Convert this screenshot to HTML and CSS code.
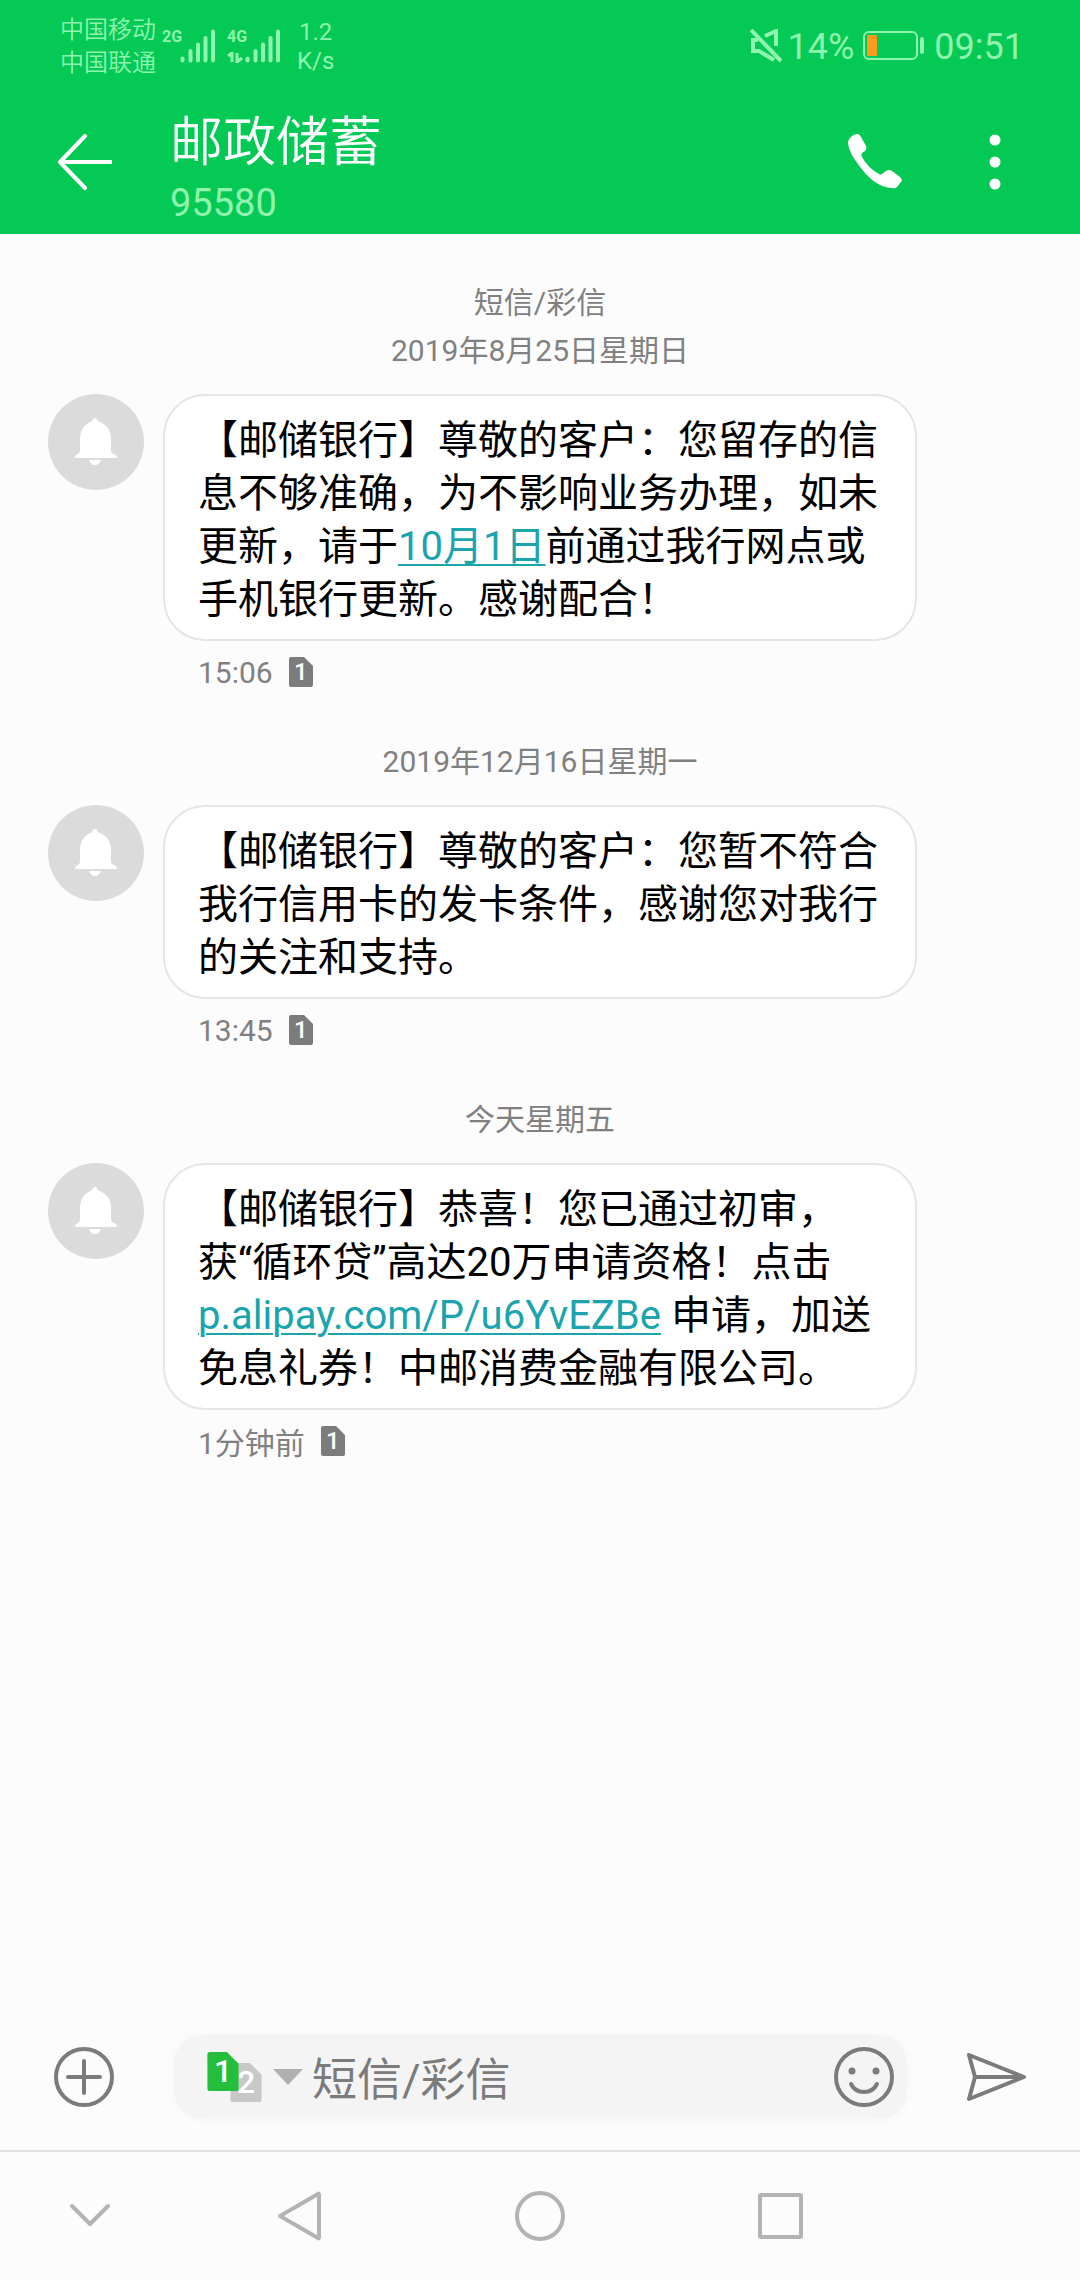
FILE: index.html
```html
<!DOCTYPE html>
<html lang="zh-CN">
<head>
<meta charset="utf-8">
<meta name="viewport" content="width=device-width, initial-scale=1">
<title>邮政储蓄</title>
<link rel="stylesheet" href="styles.css">
</head>
<body>
<svg class="defs" aria-hidden="true">
  <symbol id="bell" viewBox="0 0 96 96">
    <path d="M47 24Q49 24 50 27Q63 32 63 45V56Q63 59 66 60Q69 61 69 64H27Q27 61 30 60Q32 59 32 56V45Q32 32 44 27Q45 24 47 24ZM41 66H53Q51 71 47 71Q43 71 41 66Z"/>
  </symbol>
  <symbol id="sim" viewBox="0 0 24 30">
    <path d="M2 0H15L24 9V28Q24 30 22 30H2Q0 30 0 28V2Q0 0 2 0Z"/>
  </symbol>
  <symbol id="signal" viewBox="0 0 36 34">
    <path d="M2.500 29.500v2M10.500 22v9.500M18 15.500v16M25.500 9v22.500M33 2.500v29"/>
  </symbol>
</svg>

<header class="header">
  <div class="status">
    <div class="carriers"><span>中国移动</span><span>中国联通</span></div>
    <div class="net"><span class="gen">2G</span></div>
    <svg class="bars"><use href="#signal"/></svg>
    <div class="net net-second"><span class="gen">4G</span>
      <svg class="arrows" viewBox="0 0 16 11"><path d="M1 4L5 1V10M10 1V10L15 6"/></svg>
    </div>
    <svg class="bars"><use href="#signal"/></svg>
    <div class="speed"><span>1.2</span><span>K/s</span></div>
    <svg class="mute" viewBox="0 0 34 34"><path d="M1 1L31 32M15 7L26 2V17M8 11H3V22H9L24 31"/></svg>
    <span class="percent">14%</span>
    <svg class="battery" viewBox="0 0 62 30"><rect class="shell" x="1" y="1" width="53" height="27" rx="5"/><rect class="level" x="4" y="4" width="10" height="21" rx="1"/><rect class="cap" x="57" y="6" width="4" height="17" rx="2"/></svg>
    <time class="clock">09:51</time>
  </div>
  <div class="appbar">
    <button class="icon-btn" aria-label="返回"><svg class="back" viewBox="0 0 54 56"><path d="M27 2L2 28L27 54M2 28H53"/></svg></button>
    <div class="contact"><h1>邮政储蓄</h1><p>95580</p></div>
    <button class="icon-btn" aria-label="拨打电话"><svg class="phone" viewBox="0 0 54 56"><path d="M9 0C11 0 12 1 13 3L18 12C19 14 18 16 17 17L14 19Q13 21 14 23Q20 34 31 40Q33 41 34 40L38 37Q41 35 44 37L52 43Q55 46 53 48L49 53Q47 55 44 54Q27 53 13 34Q0 18 0 8Q1 4 4 2Q7 0 9 0Z"/></svg></button>
    <button class="icon-btn more-btn" aria-label="更多"><svg class="more" viewBox="0 0 12 56"><circle cx="6" cy="6" r="5.500"/><circle cx="6" cy="28" r="5.500"/><circle cx="6" cy="50" r="5.500"/></svg></button>
  </div>
</header>

<main class="thread">
  <section class="group">
    <h2 class="date">短信/彩信<br>2019年8月25日星期日</h2>
    <div class="message">
      <svg class="avatar"><use href="#bell"/></svg>
      <div class="content">
        <p class="bubble">【邮储银行】尊敬的客户：您留存的信息不够准确，为不影响业务办理，如未更新，请于<a href="#date">10月1日</a>前通过我行网点或手机银行更新。感谢配合！</p>
        <div class="meta"><time>15:06</time><span class="sim"><svg><use href="#sim"/></svg><b>1</b></span></div>
      </div>
    </div>
  </section>
  <section class="group">
    <h2 class="date">2019年12月16日星期一</h2>
    <div class="message">
      <svg class="avatar"><use href="#bell"/></svg>
      <div class="content">
        <p class="bubble">【邮储银行】尊敬的客户：您暂不符合我行信用卡的发卡条件，感谢您对我行的关注和支持。</p>
        <div class="meta"><time>13:45</time><span class="sim"><svg><use href="#sim"/></svg><b>1</b></span></div>
      </div>
    </div>
  </section>
  <section class="group">
    <h2 class="date">今天星期五</h2>
    <div class="message">
      <svg class="avatar"><use href="#bell"/></svg>
      <div class="content">
        <p class="bubble">【邮储银行】恭喜！您已通过初审，<br>获“循环贷”高达20万申请资格！点击<br><a href="#link">p.alipay.com/P/u6YvEZBe</a> 申请，加送<br>免息礼券！中邮消费金融有限公司。</p>
        <div class="meta"><time>1分钟前</time><span class="sim"><svg><use href="#sim"/></svg><b>1</b></span></div>
      </div>
    </div>
  </section>
</main>

<form class="composer">
  <button type="button" class="icon-btn" aria-label="添加"><svg class="round" viewBox="0 0 60 60"><circle cx="30" cy="30" r="28"/><path d="M30 14V46M14 30H46"/></svg></button>
  <div class="field">
    <button type="button" class="sim-pick" aria-label="选择 SIM 卡">
      <span class="sim sim-two"><svg><use href="#sim"/></svg><b>2</b></span>
      <span class="sim sim-one"><svg><use href="#sim"/></svg><b>1</b></span>
      <svg class="caret" viewBox="0 0 30 16"><path d="M0 0H30L15 16Z"/></svg>
    </button>
    <input type="text" aria-label="短信/彩信" placeholder="短信/彩信">
    <button type="button" class="icon-btn" aria-label="表情"><svg class="round" viewBox="0 0 60 60"><circle cx="30" cy="30" r="28"/><path d="M17 37Q21 45 30 45Q39 45 43 37"/><circle class="eye" cx="18" cy="24" r="3.500"/><circle class="eye" cx="42" cy="24" r="3.500"/></svg></button>
  </div>
  <button type="submit" class="icon-btn" aria-label="发送"><svg class="round" viewBox="0 0 60 60"><path d="M2 8L57 30L2 52L8 30ZM8 30H57"/></svg></button>
</form>

<nav class="navbar" aria-label="系统导航">
  <button class="icon-btn" aria-label="收起"><svg class="nav-icon" viewBox="0 0 50 50"><path d="M7 15L25 33L43 15"/></svg></button>
  <button class="icon-btn" aria-label="返回"><svg class="nav-icon" viewBox="0 0 50 50"><path d="M5 25L43 3Q44 2 44 4V46Q44 48 43 47Z"/></svg></button>
  <button class="icon-btn" aria-label="主屏幕"><svg class="nav-icon" viewBox="0 0 50 50"><circle cx="25" cy="25" r="23"/></svg></button>
  <button class="icon-btn" aria-label="最近任务"><svg class="nav-icon" viewBox="0 0 50 50"><rect x="5" y="4" width="41" height="42" rx="1"/></svg></button>
</nav>
</body>
</html>
```

FILE: styles.css
```css
* { box-sizing: border-box; }

body {
  margin: 0;
  min-height: 100vh;
  display: flex;
  flex-direction: column;
  background: #fdfcfd;
  color: #000;
  font-family: Roboto, "Noto Sans CJK SC", sans-serif;
}

h1, h2, p { margin: 0; font-weight: 400; }

svg { display: block; }

.defs { display: none; }

button {
  padding: 0;
  border: 0;
  background: none;
  color: inherit;
  font: inherit;
}

.icon-btn {
  display: flex;
  align-items: center;
  justify-content: center;
}

/* Header */
.header { background: #05c955; color: #fff; }

.status {
  display: flex;
  align-items: center;
  height: 92px;
  padding: 0 56px 0 60px;
  color: #8ff5ae;
}

.carriers, .speed {
  display: flex;
  flex-direction: column;
  padding-top: 2px;
}

.carriers {
  font-size: 24px;
  line-height: 33px;
  font-weight: 350;
}

.net {
  width: 18px;
  height: 36px;
  margin-left: 6px;
  display: flex;
  flex-direction: column;
  gap: 6px;
}

.net-second { margin-left: 11px; }

.gen {
  font-size: 16px;
  line-height: 18px;
  font-weight: 700;
}

.arrows { width: 16px; height: 11px; fill: none; stroke: currentColor; stroke-width: 3; }

.bars { width: 36px; height: 34px; fill: none; stroke: currentColor; stroke-width: 4; stroke-linecap: round; }

.speed {
  margin-left: 16px;
  align-items: center;
  font-size: 24px;
  line-height: 29px;
}

.mute {
  width: 34px;
  height: 34px;
  margin-left: auto;
  fill: none;
  stroke: currentColor;
  stroke-width: 4;
}

.percent, .clock { padding-top: 2px; font-size: 36px; line-height: 44px; }

.percent { margin-left: 4px; }

.battery { width: 62px; height: 30px; margin: 0 9px; }

.shell { fill: none; stroke: currentColor; stroke-width: 2; }

.level { fill: #ff9a1e; }

.cap { fill: currentColor; }

.appbar {
  display: flex;
  align-items: center;
  height: 142px;
  padding: 0 79px 2px 58px;
}

.back, .phone { width: 54px; height: 56px; }

.back { fill: none; stroke: currentColor; stroke-width: 4; stroke-linecap: round; stroke-linejoin: round; }

.phone, .more { fill: currentColor; }

.more { width: 12px; height: 56px; }

.more-btn { margin-left: 87px; }

.contact { flex: 1; margin-left: 58px; padding-top: 12px; }

.contact h1 { font-size: 53px; line-height: 70px; font-weight: 350; }

.contact p { font-size: 38px; line-height: 50px; color: #8ff5ae; }

/* Message thread */
.thread { flex: 1; padding: 3px 0 48px; }

.group { padding-top: 42px; }

.date {
  margin-bottom: 19px;
  font-size: 30px;
  line-height: 48px;
  text-align: center;
  color: #808080;
}

.message {
  display: flex;
  align-items: flex-start;
  gap: 19px;
  padding: 0 163px 0 48px;
}

.avatar {
  flex: none;
  width: 96px;
  height: 96px;
  border-radius: 50%;
  background: #dbdbdb;
  fill: #fff;
}

.content { flex: 1; min-width: 0; }

.bubble {
  padding: 18px 33px 13px;
  border: 2px solid #e6e5e6;
  border-radius: 42px;
  background: #fff;
  font-size: 40px;
  line-height: 53px;
  text-spacing-trim: space-all;
}

.bubble a {
  color: #1ba4ad;
  text-decoration-thickness: 2px;
  text-underline-offset: 4px;
}

.meta {
  display: flex;
  align-items: center;
  gap: 16px;
  height: 48px;
  margin: 7px 0 0 35px;
  font-size: 30px;
  color: #808080;
}

.sim {
  display: grid;
  place-items: center;
  width: 24px;
  height: 30px;
  font-size: 24px;
  line-height: 30px;
}

.sim svg, .sim b { grid-area: 1 / 1; }

.sim svg { width: 100%; height: 100%; fill: #7c7c7c; }

.sim b { color: #fff; font-weight: 500; }

/* Composer */
.composer {
  display: flex;
  align-items: center;
  gap: 60px;
  height: 146px;
  padding: 0 53px 0 54px;
  color: #7b7b7b;
}

.round {
  width: 60px;
  height: 60px;
  fill: none;
  stroke: currentColor;
  stroke-width: 4;
  stroke-linecap: round;
  stroke-linejoin: round;
}

.eye { fill: currentColor; stroke: none; }

.field {
  flex: 1;
  min-width: 0;
  display: flex;
  align-items: center;
  height: 84px;
  padding: 0 13px 0 33px;
  border-radius: 28px;
  background: #f5f4f5;
  box-shadow: 0 0 10px #f5f4f5;
}

.sim-pick {
  display: grid;
  grid-template-columns: 23px 9px 23px 11px 30px;
  align-items: center;
  height: 50px;
}

.sim-pick .sim { width: 32px; height: 39px; font-size: 32px; line-height: 39px; }

.sim-one { grid-area: 1 / 1 / 2 / 3; align-self: start; }

.sim-two { grid-area: 1 / 2 / 2 / 4; align-self: end; }

.sim-one svg { fill: #25be3c; }

.sim-two svg { fill: #c8c8c8; }

.caret { grid-area: 1 / 5; width: 30px; height: 16px; fill: #b0b0b0; }

.field input {
  flex: 1;
  min-width: 0;
  height: 72px;
  margin-left: 9px;
  padding: 6px 0 0;
  border: 0;
  outline: 0;
  background: none;
  font: inherit;
  font-size: 45px;
  color: #000;
}

.field input::placeholder { color: #7b7b7b; opacity: 1; }

/* System navigation */
.navbar {
  display: grid;
  grid-template-columns: 3fr 4fr 4fr 4fr 3fr;
  height: 130px;
  border-top: 2px solid #e2e1e2;
}

.nav-icon {
  width: 50px;
  height: 50px;
  fill: none;
  stroke: #b3b3b3;
  stroke-width: 4;
  stroke-linecap: round;
  stroke-linejoin: round;
}
```
